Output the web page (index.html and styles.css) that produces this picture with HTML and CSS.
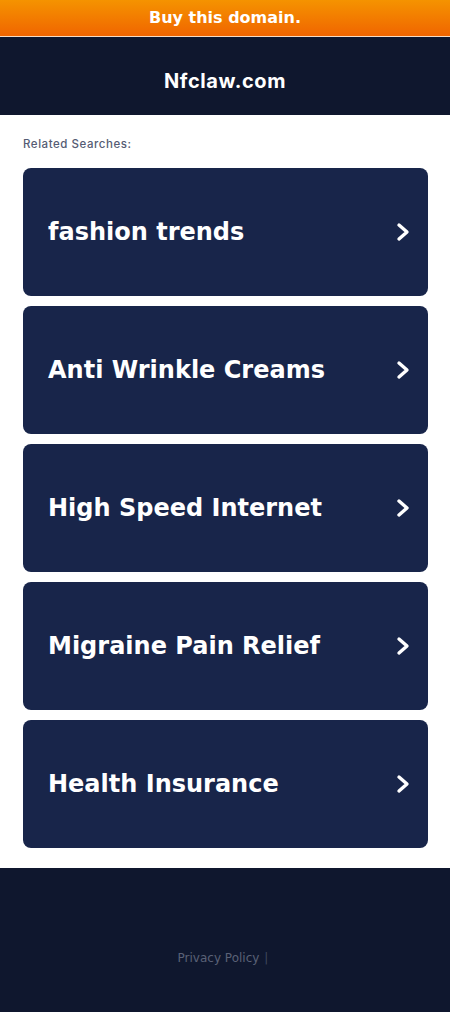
FILE: index.html
```html
<!DOCTYPE html>
<html>
  <head>
    <title>Nfclaw.com</title>
    <link rel="stylesheet" href="styles.css">
  </head>
  <body>
    <a class="banner" href="#">Buy this domain.</a>
    <header class="header">
      <h1 class="domain">Nfclaw.com</h1>
    </header>
    <main class="content">
      <p class="related">Related Searches:</p>
      <ul class="links">
        <li><a class="link" href="#"><span>fashion trends</span><svg class="chevron" viewBox="0 0 14 20"><path d="M3 3l8 7-8 7"/></svg></a></li>
        <li><a class="link" href="#"><span>Anti Wrinkle Creams</span><svg class="chevron" viewBox="0 0 14 20"><path d="M3 3l8 7-8 7"/></svg></a></li>
        <li><a class="link" href="#"><span>High Speed Internet</span><svg class="chevron" viewBox="0 0 14 20"><path d="M3 3l8 7-8 7"/></svg></a></li>
        <li><a class="link" href="#"><span>Migraine Pain Relief</span><svg class="chevron" viewBox="0 0 14 20"><path d="M3 3l8 7-8 7"/></svg></a></li>
        <li><a class="link" href="#"><span>Health Insurance</span><svg class="chevron" viewBox="0 0 14 20"><path d="M3 3l8 7-8 7"/></svg></a></li>
      </ul>
    </main>
    <footer class="footer">
      <a class="privacy" href="#">Privacy Policy</a>
      <span class="sep">|</span>
    </footer>
  </body>
</html>
```

FILE: styles.css
```css
html, body {
  margin: 0;
  padding: 0;
}

body {
  background-color: #fff;
  font-family: 'DejaVu Sans', sans-serif;
}

.banner {
  display: block;
  height: 36px;
  line-height: 35px;
  text-align: center;
  color: #fff;
  font-size: 16px;
  font-weight: bold;
  text-decoration: none;
  background: linear-gradient(#f59300, #f06500);
  border-bottom: 1px solid #f7dcc4;
}

.header {
  height: 78px;
  box-sizing: border-box;
  padding-top: 9px;
  background-color: #0f172e;
  display: flex;
  justify-content: center;
  align-items: center;
}

.domain {
  margin: 0;
  color: #fff;
  font-family: 'Inter', sans-serif;
  font-size: 20px;
  font-weight: 700;
  letter-spacing: 0.6px;
}

.content {
  padding: 22px 22px 20px 23px;
}

.related {
  margin: 0 0 17px 0;
  font-family: 'Inter', sans-serif;
  font-size: 11.5px;
  font-weight: 500;
  color: #555c74;
  letter-spacing: 0.55px;
}

.links {
  list-style: none;
  margin: 0;
  padding: 0;
  display: flex;
  flex-direction: column;
  gap: 10px;
}

.link {
  height: 128px;
  display: flex;
  align-items: center;
  justify-content: space-between;
  padding: 0 18px 0 25px;
  background-color: #18254a;
  border-radius: 8px;
  color: #fff;
  font-size: 24px;
  font-weight: bold;
  text-decoration: none;
}

.chevron {
  width: 14px;
  height: 20px;
  fill: none;
  stroke: #fff;
  stroke-width: 3.4;
  stroke-linecap: round;
  stroke-linejoin: round;
}

.footer {
  height: 144px;
  background-color: #0f172e;
  display: flex;
  justify-content: center;
  align-items: center;
  gap: 5px;
  padding-top: 35px;
  padding-right: 4px;
  box-sizing: border-box;
  font-size: 12px;
  color: #40485f;
}

.privacy {
  color: #5a6176;
  text-decoration: none;
}
```
